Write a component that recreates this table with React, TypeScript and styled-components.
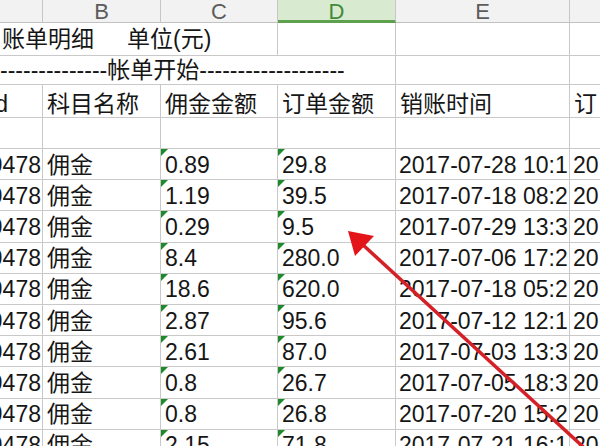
import React from "react";
import styled, { createGlobalStyle, css } from "styled-components";

const Global = createGlobalStyle`
  html, body { margin: 0; padding: 0; background: #ffffff; }
  body {
    width: 600px;
    height: 446px;
    overflow: hidden;
    font-family: "Liberation Sans", "Noto Sans CJK SC", sans-serif;
  }
`;

const Sheet = styled.div`
  position: relative;
  width: 600px;
  height: 446px;
  overflow: hidden;
  display: grid;
  grid-template-columns: 43px 118px 117px 118px 174px 40px;
  grid-template-rows: 23px 33px 29px 33px 31px repeat(10, 31.2px);
  font-size: 23px;
  color: #161616;
`;

const ColHead = styled.div<{ $active?: boolean }>`
  display: flex;
  align-items: flex-start;
  justify-content: center;
  box-sizing: border-box;
  font-size: 22px;
  line-height: 23px;
  background: ${(p) => (p.$active ? "#d8ebd1" : "#f2f2f2")};
  color: ${(p) => (p.$active ? "#3f8b3a" : "#5c5c5c")};
  border-right: 1px solid #c6c6c6;
  border-bottom: ${(p) => (p.$active ? "3px solid #5da14c" : "1px solid #c2c2c2")};
`;

const Cell = styled.div<{
  $span?: number;
  $justify?: string;
  $pl?: number;
  $pr?: number;
  $pt?: number;
  $flag?: boolean;
}>`
  position: relative;
  grid-column: span ${(p) => p.$span ?? 1};
  display: flex;
  align-items: center;
  justify-content: ${(p) => p.$justify ?? "flex-start"};
  box-sizing: border-box;
  padding: ${(p) => p.$pt ?? 0}px ${(p) => p.$pr ?? 0}px 0 ${(p) => p.$pl ?? 4}px;
  border-right: 1px solid #c9c9c9;
  border-bottom: 1px solid #c9c9c9;
  overflow: hidden;
  white-space: nowrap;
  line-height: 26px;
  ${(p) =>
    p.$flag &&
    css`
      &::before {
        content: "";
        position: absolute;
        top: 0;
        left: 0;
        border-top: 7px solid #1f8a2b;
        border-right: 7px solid transparent;
      }
    `}
`;

const Gap = styled.span`
  margin-left: 33px;
`;

const Overlay = styled.svg`
  position: absolute;
  left: 0;
  top: 0;
  width: 600px;
  height: 446px;
  pointer-events: none;
`;

const rows: [string, string, string][] = [
  ["0.89", "29.8", "2017-07-28 10:1"],
  ["1.19", "39.5", "2017-07-18 08:2"],
  ["0.29", "9.5", "2017-07-29 13:3"],
  ["8.4", "280.0", "2017-07-06 17:2"],
  ["18.6", "620.0", "2017-07-18 05:2"],
  ["2.87", "95.6", "2017-07-12 12:1"],
  ["2.61", "87.0", "2017-07-03 13:3"],
  ["0.8", "26.7", "2017-07-05 18:3"],
  ["0.8", "26.8", "2017-07-20 15:2"],
  ["2.15", "71.8", "2017-07-21 16:1"],
];

export default function App() {
  return (
    <>
      <Global />
      <Sheet>
        <ColHead />
        <ColHead>B</ColHead>
        <ColHead>C</ColHead>
        <ColHead $active>D</ColHead>
        <ColHead>E</ColHead>
        <ColHead />

        <Cell $span={3} $pl={2}>
          账单明细<Gap>单位(元)</Gap>
        </Cell>
        <Cell />
        <Cell />
        <Cell />

        <Cell $span={4} $pl={0}>
          --------------帐单开始-------------------
        </Cell>
        <Cell />
        <Cell />

        <Cell $justify="flex-end" $pr={34} $pt={6}>id</Cell>
        <Cell $pt={6}>科目名称</Cell>
        <Cell $pt={6}>佣金金额</Cell>
        <Cell $pt={6}>订单金额</Cell>
        <Cell $pt={6}>销账时间</Cell>
        <Cell $pt={6}>订</Cell>

        <Cell />
        <Cell />
        <Cell />
        <Cell />
        <Cell />
        <Cell />

        {rows.map(([fee, amount, time], i) => (
          <React.Fragment key={i}>
            <Cell $justify="flex-end" $pr={1} $pt={1}>9478</Cell>
            <Cell $pt={1}>佣金</Cell>
            <Cell $flag $pt={1}>{fee}</Cell>
            <Cell $flag $pt={1}>{amount}</Cell>
            <Cell $pl={3} $pt={1}>{time}</Cell>
            <Cell $pl={3} $pt={1}>20</Cell>
          </React.Fragment>
        ))}

        <Overlay viewBox="0 0 600 446">
          <line x1="604" y1="466" x2="362" y2="244" stroke="#d42027" strokeWidth="3.5" />
          <polygon points="348,231 374,236 355,256" fill="#e3151b" />
        </Overlay>
      </Sheet>
    </>
  );
}
